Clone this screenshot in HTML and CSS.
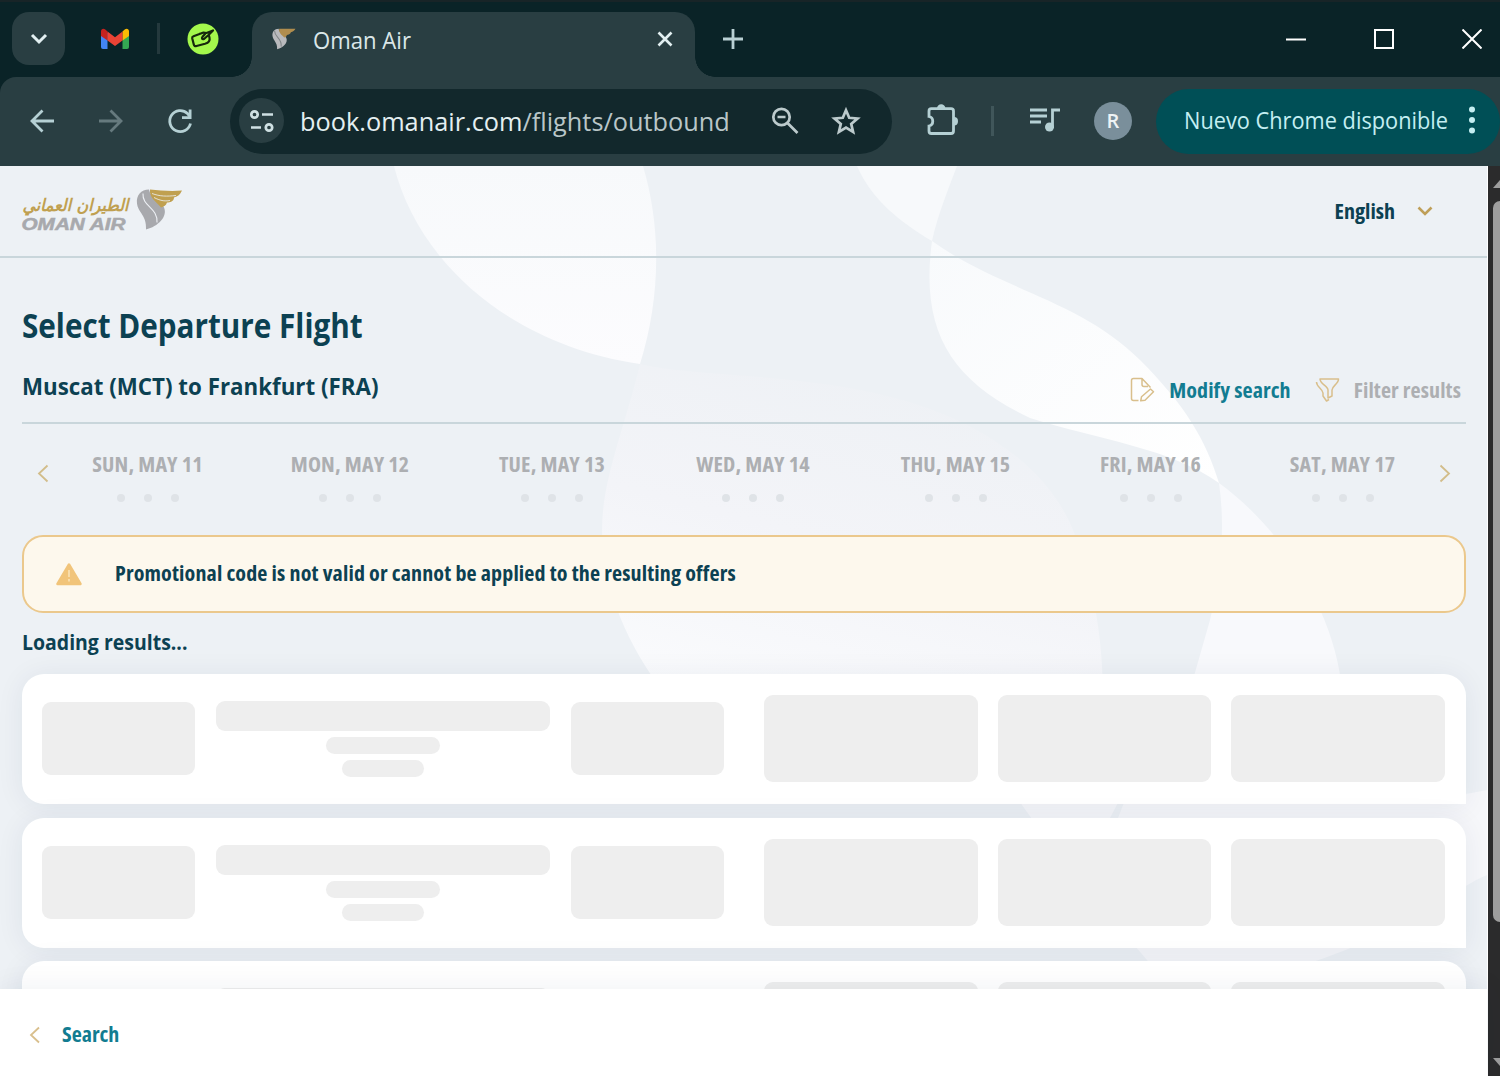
FILE: index.html
```html
<!DOCTYPE html>
<html lang="en">
<head>
  <meta charset="UTF-8">
  <meta name="viewport" content="width=device-width, initial-scale=1">
  <title>Oman Air</title>
  <link rel="stylesheet" href="styles.css">
</head>
<body>
  <div class="tab-strip">
    <div class="tab-search">
      <svg width="20" height="14" viewBox="0 0 20 14"><path d="M3 3l7 7 7-7" fill="none" stroke="#e2eff1" stroke-width="3"/></svg>
    </div>
    <svg class="pinned-gmail" width="28" height="22" viewBox="0 0 28 22">
      <path d="M0 5h6.500v16H2a2 2 0 0 1-2-2z" fill="#4285f4"/>
      <path d="M21.500 5H28v14a2 2 0 0 1-2 2h-4.500z" fill="#34a853"/>
      <path d="M21.500 3.500L24 1.300c2-1.500 4 0 4 2V8l-6.500 4.500z" fill="#fbbc04"/>
      <path d="M0 8V3.300c0-2 2-3.500 4-2l2.500 2.200v9z" fill="#c5221f"/>
      <path d="M6.500 3.500l7.500 5.700 7.500-5.700v9L14 18l-7.500-5.500z" fill="#ea4335"/>
    </svg>
    <div class="strip-divider"></div>
    <svg class="pinned-app" width="32" height="32" viewBox="0 0 32 32">
      <circle cx="16" cy="16" r="15.500" fill="#a4f84c"/>
      <path d="M12.500 11l-6 2.200c-1 .4-1.500 1-1.300 2l1.600 6.300c.3 1.400 1.300 1.900 2.700 1.500l8.500-2.200c3.500-1 5.200-3 4.500-6l-.5-2M12.500 11l4-1.500 3 .5 6.500-2.500-4.500 4.500-4.500 4c-2 .6-2.500-.8-1.500-2.200l2.500-2.800" fill="none" stroke="#16280c" stroke-width="2.200" stroke-linecap="round" stroke-linejoin="round"/>
    </svg>
    <div class="tab">
      <svg width="24" height="22" viewBox="0 0 47 42">
        <path d="M13 1C5 1 0 7 1 15c1 9 10 12 9 26 12-3 22-13 18-22C25 12 14 9 13 1z" fill="#b9babd"/>
        <path d="M14 1h32c-2 4-5 6-9 7-1 4-5 5-8 5 0 3-3 4-5 5C19 13 13 9 14 1z" fill="#b08d4e"/>
        <path d="M5 5c0 13 15 14 13 31" fill="none" stroke="#7f8487" stroke-width="2"/>
      </svg>
      <span class="tab-title">Oman Air</span>
      <svg class="tab-close" width="16" height="16" viewBox="0 0 16 16"><path d="M1.500 1.500l13 13M14.500 1.500l-13 13" stroke="#e2eff1" stroke-width="2.600"/></svg>
    </div>
    <svg class="new-tab" width="20" height="20" viewBox="0 0 20 20"><path d="M10 0v20M0 10h20" stroke="#b9d0d4" stroke-width="2.800"/></svg>
    <div class="window-controls">
      <svg width="20" height="20" viewBox="0 0 20 20"><path d="M0 10.500h20" stroke="#fff" stroke-width="2"/></svg>
      <svg width="20" height="20" viewBox="0 0 20 20"><rect x="1" y="1" width="18" height="18" fill="none" stroke="#fff" stroke-width="2"/></svg>
      <svg width="20" height="20" viewBox="0 0 20 20"><path d="M.5.5l19 19M19.500.5l-19 19" stroke="#fff" stroke-width="2"/></svg>
    </div>
  </div>

  <div class="toolbar-wrap">
    <div class="toolbar">
      <div class="nav-buttons">
        <svg width="30" height="30" viewBox="0 0 30 30"><path d="M27 15H6M15.500 4.500L5 15l10.500 10.500" fill="none" stroke="#b5d0d4" stroke-width="2.800"/></svg>
        <svg width="30" height="30" viewBox="0 0 30 30"><path d="M3 15h21M14.500 4.500L25 15 14.500 25.500" fill="none" stroke="#667a7e" stroke-width="2.800"/></svg>
        <svg width="30" height="30" viewBox="0 0 30 30"><path d="M25.500 17.500A10.500 10.500 0 1 1 22.500 7.500l2.500 3" fill="none" stroke="#b5d0d4" stroke-width="2.800"/><path d="M26.500 3.500V13H17v-2.800h6.700V3.500z" fill="#b5d0d4"/></svg>
      </div>
      <div class="omnibox">
        <div class="site-info">
          <svg width="26" height="26" viewBox="0 0 26 26" fill="none" stroke="#cfe0e3" stroke-width="2.700"><circle cx="5.500" cy="6.500" r="3.200"/><path d="M13 6.500h11M2 19.500h10"/><circle cx="20" cy="19.500" r="3.200"/></svg>
        </div>
        <span class="url"><span class="url-host">book.omanair.com</span>/flights/outbound</span>
        <svg width="30" height="30" viewBox="0 0 30 30" fill="none" stroke="#bccacc" stroke-width="2.700"><circle cx="11.500" cy="11" r="8.200"/><path d="M7.500 11h8M17.500 17l10 10"/></svg>
        <svg width="30" height="30" viewBox="0 0 30 30"><path d="M15 4.200l3.200 7.600 8.300.7-6.300 5.400 1.900 8.100-7.100-4.300L7.900 26l1.900-8.100-6.300-5.400 8.300-.7z" fill="none" stroke="#bccacc" stroke-width="2.700"/></svg>
      </div>
      <svg class="ext-icon" width="34" height="34" viewBox="0 0 34 34">
        <path d="M4 8c0-1.500 1-2.300 2.300-2.300H26c1.500 0 2.500 1 2.500 2.300v20c0 1.500-1 2.500-2.500 2.500H6.300C5 30.500 4 29.500 4 28v-5c5-1 5-8.500 0-9.500z" fill="none" stroke="#b5d0d4" stroke-width="2.800"/>
        <path d="M12 5.500a4.200 4.200 0 0 1 8.400 0zM29 14a4 4.200 0 0 1 0 8.400z" fill="#b5d0d4"/>
      </svg>
      <div class="toolbar-divider"></div>
      <svg class="media-icon" width="32" height="30" viewBox="0 0 32 30">
        <path d="M1 4h17M1 10h17M1 16h11" stroke="#b5d0d4" stroke-width="2.800"/>
        <path d="M23.500 22V4H31" fill="none" stroke="#b5d0d4" stroke-width="2.800"/><circle cx="20.500" cy="21" r="4.500" fill="#b5d0d4"/>
      </svg>
      <div class="avatar">R</div>
      <div class="update-pill">
        <span>Nuevo Chrome disponible</span>
        <svg width="6" height="28" viewBox="0 0 6 28" fill="#c4eef2"><circle cx="3" cy="3.500" r="3"/><circle cx="3" cy="14" r="3"/><circle cx="3" cy="24.500" r="3"/></svg>
      </div>
    </div>
  </div>

  <div class="viewport">
    <div class="page">
      <!-- ribbon pattern behind the content -->
      <svg class="ribbons" viewBox="0 166 1487 910" width="1487" height="910">
        <defs>
          <linearGradient id="r1" x1="0" y1="0" x2="0" y2="1"><stop offset="0" stop-color="#f7f9fb"/><stop offset="1" stop-color="#fcfcfe"/></linearGradient>
          <linearGradient id="r2" x1="0.15" y1="1" x2="0.55" y2="0"><stop offset="0" stop-color="#fafbfd"/><stop offset="0.5" stop-color="#f3f4f8"/><stop offset="1" stop-color="#eef1f5"/></linearGradient>
          <linearGradient id="r3" x1="0" y1="0" x2="1" y2="1"><stop offset="0" stop-color="#f8fafc"/><stop offset="1" stop-color="#ffffff"/></linearGradient>
        </defs>
        <path d="M394 166C418 262 510 345 640 364C660 300 662 230 643 166z" fill="url(#r1)"/>
        <path d="M640 364C700 378 810 372 910 402C1000 430 1055 480 1075 535C1092 580 1102 630 1103 690H662C630 648 602 590 602 530C602 480 624 430 640 364z" fill="url(#r2)"/>
        <path d="M857 166C872 200 900 222 932 241C938 214 948 190 957 166z" fill="#f7f9fb"/>
        <path d="M932 241C1000 290 1080 300 1140 360C1185 405 1206 440 1219 483C1170 448 1100 440 1030 418C950 380 920 330 932 241z" fill="url(#r3)"/>
        <path d="M1219 483C1225 525 1222 570 1210 620L1190 690H1342C1336 620 1290 535 1219 483z" fill="#f8f9fc"/>
        <path d="M1015 795C1060 860 1100 905 1160 975H1270C1400 940 1450 890 1487 875V790C1400 810 1260 780 1127 795L1118 818H1110L1122 795z" fill="#f6f7fa"/>
      </svg>

      <header class="site-header">
        <svg class="logo" width="164" height="48" viewBox="0 0 164 48">
          <text class="logo-ar" x="106.500" y="24" textLength="106" lengthAdjust="spacingAndGlyphs" direction="rtl">الطيران العماني</text>
          <text class="logo-en" x="-0.500" y="42.500" textLength="104" lengthAdjust="spacingAndGlyphs">OMAN AIR</text>
          <g transform="translate(114 1.500)">
            <path d="M13 1C5 1 0 7 1 15c1 9 10 12 9 26 12-3 22-13 18-22C25 12 14 9 13 1z" fill="#a8a9ad"/>
            <path d="M14 1c10 1 21 2 32 1-2 4-4 6-8 7 0 4-4 5-7 5-1 3-3 4-6 5C20 13 13 9 14 1z" fill="#c0a050"/>
            <path d="M16 5c8 3 15 3 24 2M18 9c6 3 10 4 16 3" fill="none" stroke="#eef1f5" stroke-width="0.800"/>
            <path d="M7 5c-1 13 15 14 14 29" fill="none" stroke="#eef1f5" stroke-width="1.100"/>
          </g>
        </svg>
        <div class="language">
          <span>English</span>
          <svg width="16" height="12" viewBox="0 0 16 12"><path d="M1.500 3.500L8 10l6.500-6.500" fill="none" stroke="#bf9f58" stroke-width="2.600"/></svg>
        </div>
      </header>

      <main class="content">
        <h1>Select Departure Flight</h1>
        <div class="route-row">
          <h2>Muscat (MCT) to Frankfurt (FRA)</h2>
          <div class="tools">
            <a class="tool">
              <svg width="25" height="25" viewBox="0 0 25 25" fill="none" stroke="#d9bf8c" stroke-width="1.500" stroke-linejoin="round"><path d="M20.500 10.500L12 1.500H3.500c-1.300 0-2 .8-2 2v18c0 1.200.7 2 2 2h5M12 1.500v6c0 1.300.8 2 2 2h4"/><path d="M20.500 12l3 2.800-8.500 8.400-4.300.6.800-4z"/></svg>
              <span>Modify search</span>
            </a>
            <a class="tool tool-disabled">
              <svg width="25" height="25" viewBox="0 0 25 25" fill="none" stroke="#d9bf8c" stroke-width="1.500" stroke-linejoin="round"><path d="M5 2h18.500c0 5-6.500 7-6.500 11v6l-4 2v-8C13 9 5 7 5 2z"/><path d="M1.500 5c0 5 6 6.500 6.500 11v3l3.500 5 2.500-1.500"/></svg>
              <span>Filter results</span>
            </a>
          </div>
        </div>

        <div class="date-bar">
          <svg class="date-arrow" width="42" height="20" viewBox="0 0 42 20"><path d="M25.500 2.500L17 10.500l8.500 8" fill="none" stroke="#d2bd8a" stroke-width="1.800"/></svg>
          <div class="days">
            <div class="day"><span>SUN, MAY 11</span><div class="dots"><i></i><i></i><i></i></div></div>
            <div class="day"><span>MON, MAY 12</span><div class="dots"><i></i><i></i><i></i></div></div>
            <div class="day"><span>TUE, MAY 13</span><div class="dots"><i></i><i></i><i></i></div></div>
            <div class="day"><span>WED, MAY 14</span><div class="dots"><i></i><i></i><i></i></div></div>
            <div class="day"><span>THU, MAY 15</span><div class="dots"><i></i><i></i><i></i></div></div>
            <div class="day"><span>FRI, MAY 16</span><div class="dots"><i></i><i></i><i></i></div></div>
            <div class="day"><span>SAT, MAY 17</span><div class="dots"><i></i><i></i><i></i></div></div>
          </div>
          <svg class="date-arrow" width="42" height="20" viewBox="0 0 42 20"><path d="M16.500 2.500l8.500 8-8.500 8" fill="none" stroke="#d2bd8a" stroke-width="1.800"/></svg>
        </div>

        <div class="alert">
          <svg width="28" height="24" viewBox="0 0 28 24"><path d="M14 2.500L25.500 22h-23z" fill="#f1c47a" stroke="#f1c47a" stroke-width="2.500" stroke-linejoin="round"/><path d="M14 8v7M14 17v2.500" stroke="#f9dfb0" stroke-width="1.800"/></svg>
          <span>Promotional code is not valid or cannot be applied to the resulting offers</span>
        </div>

        <p class="loading">Loading results...</p>

        <div class="results">
          <div class="card">
            <div class="sk sk-time"></div>
            <div class="sk-middle"><div class="sk sk-line"></div><div class="sk sk-mid"></div><div class="sk sk-short"></div></div>
            <div class="sk sk-time"></div>
            <div class="sk sk-fare"></div><div class="sk sk-fare"></div><div class="sk sk-fare"></div>
          </div>
          <div class="card">
            <div class="sk sk-time"></div>
            <div class="sk-middle"><div class="sk sk-line"></div><div class="sk sk-mid"></div><div class="sk sk-short"></div></div>
            <div class="sk sk-time"></div>
            <div class="sk sk-fare"></div><div class="sk sk-fare"></div><div class="sk sk-fare"></div>
          </div>
          <div class="card">
            <div class="sk sk-time"></div>
            <div class="sk-middle"><div class="sk sk-line"></div><div class="sk sk-mid"></div><div class="sk sk-short"></div></div>
            <div class="sk sk-time"></div>
            <div class="sk sk-fare"></div><div class="sk sk-fare"></div><div class="sk sk-fare"></div>
          </div>
        </div>
      </main>

      <footer class="bottom-bar">
        <svg width="12" height="18" viewBox="0 0 12 18"><path d="M10 1.500L2 9l8 7.500" fill="none" stroke="#d9bf8c" stroke-width="1.800"/></svg>
        <a>Search</a>
      </footer>
    </div>

    <div class="scrollbar">
      <svg width="7" height="8" viewBox="0 0 7 8"><path d="M0 8l7-8v8z" fill="#9e9e9e"/></svg>
      <div class="thumb"></div>
      <svg class="arrow-down" width="7" height="8" viewBox="0 0 7 8"><path d="M0 0h7v8z" fill="#9e9e9e"/></svg>
    </div>
  </div>
</body>
</html>
```
FILE: styles.css
```css
:root {
  --frame: #0a2327;
  --toolbar: #293e42;
  --omnibox: #12282c;
  --page-bg: #edf1f5;
  --navy: #0c4152;
  --teal: #127c91;
  --grey: #adafb2;
  --line: #c9d6db;
  --skeleton: #eeeeee;
}
* {
  box-sizing: border-box;
}
body {
  margin: 0;
  width: 1500px;
  height: 1076px;
  overflow: hidden;
  display: flex;
  flex-direction: column;
  font-family: "Open Sans", "Noto Sans", sans-serif;
}
svg {
  display: block;
  flex: none;
}
h1, h2, p {
  margin: 0;
}

/* browser tabs */
.tab-strip {
  height: 77px;
  background: var(--frame);
  border-top: 2px solid #182427;
  display: flex;
  align-items: flex-start;
  padding-left: 12px;
}
.tab-search {
  width: 53px;
  height: 53px;
  margin-top: 10px;
  border-radius: 17px;
  background: var(--toolbar);
  display: flex;
  align-items: center;
  justify-content: center;
}
.pinned-gmail {
  margin: 26px 0 0 36px;
}
.strip-divider {
  width: 3px;
  height: 31px;
  margin: 21px 0 0 28px;
  background: #24393d;
}
.pinned-app {
  margin: 21px 0 0 27px;
}
.tab {
  position: relative;
  width: 443px;
  height: 65px;
  margin: 10px 0 0 33px;
  padding: 0 22px 11px 20px;
  background: var(--toolbar);
  border-radius: 20px 20px 0 0;
  display: flex;
  align-items: center;
}
/* outward curves at the foot of the tab */
.tab::before,
.tab::after {
  content: "";
  position: absolute;
  bottom: 0;
  width: 20px;
  height: 20px;
}
.tab::before {
  left: -20px;
  background: radial-gradient(circle at 0 0, var(--frame) 19.5px, var(--toolbar) 20px);
}
.tab::after {
  right: -20px;
  background: radial-gradient(circle at 100% 0, var(--frame) 19.5px, var(--toolbar) 20px);
}
.tab-title {
  flex: 1;
  margin-left: 17px;
  font-size: 24px;
  color: #dbe7e9;
  transform: scaleX(0.922);
  transform-origin: left;
}
.tab-close {
  margin-bottom: 1px;
}
.new-tab {
  margin: 27px 0 0 28px;
}
.window-controls {
  display: flex;
  gap: 68px;
  margin: 27px 18px 0 auto;
}

/* address row */
.toolbar-wrap {
  background: var(--frame);
}
.toolbar {
  height: 89px;
  padding: 0 0 1px 27px;
  background: var(--toolbar);
  border-radius: 16px 0 0 0;
  display: flex;
  align-items: center;
}
.nav-buttons {
  display: flex;
  gap: 39px;
}
.omnibox {
  width: 662px;
  height: 65px;
  margin-left: 35px;
  padding: 0 31px 1px 9px;
  border-radius: 33px;
  background: var(--omnibox);
  display: flex;
  align-items: center;
  gap: 31px;
}
.site-info {
  flex: none;
  width: 45px;
  height: 45px;
  margin-right: -15px;
  border-radius: 50%;
  background: var(--toolbar);
  display: flex;
  align-items: center;
  justify-content: center;
}
.url {
  flex: 1;
  min-width: 0;
  font-size: 26px;
  white-space: nowrap;
  color: #b9c6c8;
  transform: scaleX(0.974);
  transform-origin: left;
}
.url-host {
  color: #e4eff1;
}
.ext-icon {
  margin: 0 0 2px 33px;
}
.toolbar-divider {
  width: 3px;
  height: 30px;
  margin-left: 32px;
  background: #40565a;
}
.media-icon {
  margin-left: 35px;
}
.avatar {
  width: 38px;
  height: 38px;
  margin-left: 33px;
  border-radius: 50%;
  background: #7a8f9b;
  color: #eef3f5;
  font-size: 20px;
  font-weight: 600;
  line-height: 37px;
  text-align: center;
}
.update-pill {
  flex: 1;
  min-width: 0;
  height: 65px;
  margin-left: 24px;
  padding: 0 25px 2px 28px;
  border-radius: 33px;
  background: #004f56;
  color: #c4eef2;
  font-size: 23px;
  white-space: nowrap;
  display: flex;
  align-items: center;
  justify-content: space-between;
}
.update-pill span {
  transform: scaleX(0.946);
  transform-origin: left;
}

/* web page */
.viewport {
  flex: 1;
  min-height: 0;
  display: flex;
  background: #2b2b2c;
}
.page {
  position: relative;
  width: 1488px;
  display: flex;
  flex-direction: column;
  background: var(--page-bg);
  border-right: 1px solid #fff;
}
.ribbons {
  position: absolute;
  top: 0;
  left: 0;
}
.site-header {
  position: relative;
  height: 92px;
  padding: 0 54px 0 22px;
  border-bottom: 2px solid var(--line);
  display: flex;
  align-items: flex-start;
  justify-content: space-between;
}
.logo {
  margin-top: 21px;
  overflow: visible;
}
.logo-ar {
  font: italic 700 17px "DejaVu Sans", sans-serif;
  fill: #c0a050;
}
.logo-en {
  font: italic 700 16px "Liberation Sans", sans-serif;
  fill: #a8a9ad;
  stroke: #a8a9ad;
  stroke-width: 0.5px;
}
.language {
  margin-top: 29px;
  font-size: 22px;
  font-weight: 700;
  font-stretch: 75%;
  line-height: 30px;
  color: var(--navy);
  display: flex;
  align-items: center;
  gap: 22px;
}
.content {
  position: relative;
  flex: 1;
  min-height: 0;
  overflow: hidden;
  padding: 47px 21px 0 22px;
  color: var(--navy);
}
h1 {
  font-size: 34.5px;
  font-weight: 700;
  line-height: 40px;
  transform: scaleX(0.86);
  transform-origin: left;
}
.route-row {
  height: 53px;
  margin-top: 26px;
  border-bottom: 2px solid var(--line);
  display: flex;
  align-items: flex-start;
  justify-content: space-between;
}
h2 {
  font-size: 24px;
  font-weight: 700;
  line-height: 30px;
  transform: scaleX(0.93);
  transform-origin: left;
}
.tools {
  display: flex;
  gap: 24px;
  margin: 3px 5px 0 0;
}
.tool {
  display: flex;
  align-items: center;
  gap: 14px;
  font-size: 22px;
  font-weight: 700;
  font-stretch: 75%;
  letter-spacing: 0.1px;
  line-height: 30px;
  color: var(--teal);
}
.tool-disabled {
  color: var(--grey);
}
.date-bar {
  height: 111px;
  padding-top: 27px;
  display: flex;
  align-items: flex-start;
  justify-content: space-between;
}
.date-arrow {
  margin-top: 12px;
}
.days {
  display: grid;
  grid-template-columns: 108px 118px 107px 116px 110px 101px 104px;
  gap: 89.5px;
}
.day {
  display: flex;
  flex-direction: column;
  align-items: center;
  font-size: 22px;
  font-weight: 700;
  font-stretch: 75%;
  letter-spacing: 0.15px;
  line-height: 24px;
  white-space: nowrap;
  color: var(--grey);
}
.dots {
  display: flex;
  gap: 19px;
  margin-top: 19px;
}
.dots i {
  width: 8px;
  height: 8px;
  border-radius: 50%;
  background: #dfe3e7;
}
.alert {
  height: 78px;
  padding-left: 31px;
  border: 2px solid #ebc88c;
  border-radius: 21px;
  background: #fdf8ed;
  display: flex;
  align-items: center;
  gap: 32px;
  font-size: 22px;
  font-weight: 700;
  font-stretch: 75%;
  letter-spacing: 0.13px;
}
.alert span {
  margin-bottom: 4px;
}
.loading {
  margin-top: 13px;
  font-size: 22px;
  font-weight: 700;
  line-height: 30px;
  transform: scaleX(0.885);
  transform-origin: left;
}
.results {
  margin-top: 18px;
  display: flex;
  flex-direction: column;
  gap: 13.5px;
}
.card {
  height: 130px;
  padding: 21px 21px 0 20px;
  border-radius: 22px 22px 0 22px;
  background: #fff;
  box-shadow: 0 2px 28px rgba(35, 45, 90, 0.07);
  display: grid;
  grid-template-columns: 153px 336px 173px 214px 213px 214px;
  column-gap: 20px;
  align-items: start;
}
.sk {
  background: var(--skeleton);
  border-radius: 9px;
}
.sk-time {
  width: 153px;
  height: 73px;
  margin-top: 7px;
}
.sk-middle {
  display: flex;
  flex-direction: column;
  align-items: center;
  gap: 6px;
  padding-top: 6px;
}
.sk-line {
  width: 334px;
  height: 30px;
}
.sk-mid {
  width: 114px;
  height: 17px;
}
.sk-short {
  width: 82px;
  height: 17px;
}
.sk-fare {
  height: 87px;
}
.bottom-bar {
  position: relative;
  height: 87px;
  padding: 4px 0 0 29px;
  background: #fff;
  box-shadow: 0 0 28px rgba(35, 45, 90, 0.07);
  display: flex;
  align-items: center;
  gap: 21px;
  font-size: 22px;
  font-weight: 700;
  font-stretch: 75%;
  color: var(--teal);
}
.bottom-bar a {
  margin-bottom: 3px;
}
.scrollbar {
  flex: 1;
  padding: 14px 0 10px 5px;
  display: flex;
  flex-direction: column;
}
.thumb {
  height: 721px;
  margin-top: 13px;
  border-radius: 8px 0 0 8px;
  background: #9e9e9e;
}
.arrow-down {
  margin-top: auto;
}
```
